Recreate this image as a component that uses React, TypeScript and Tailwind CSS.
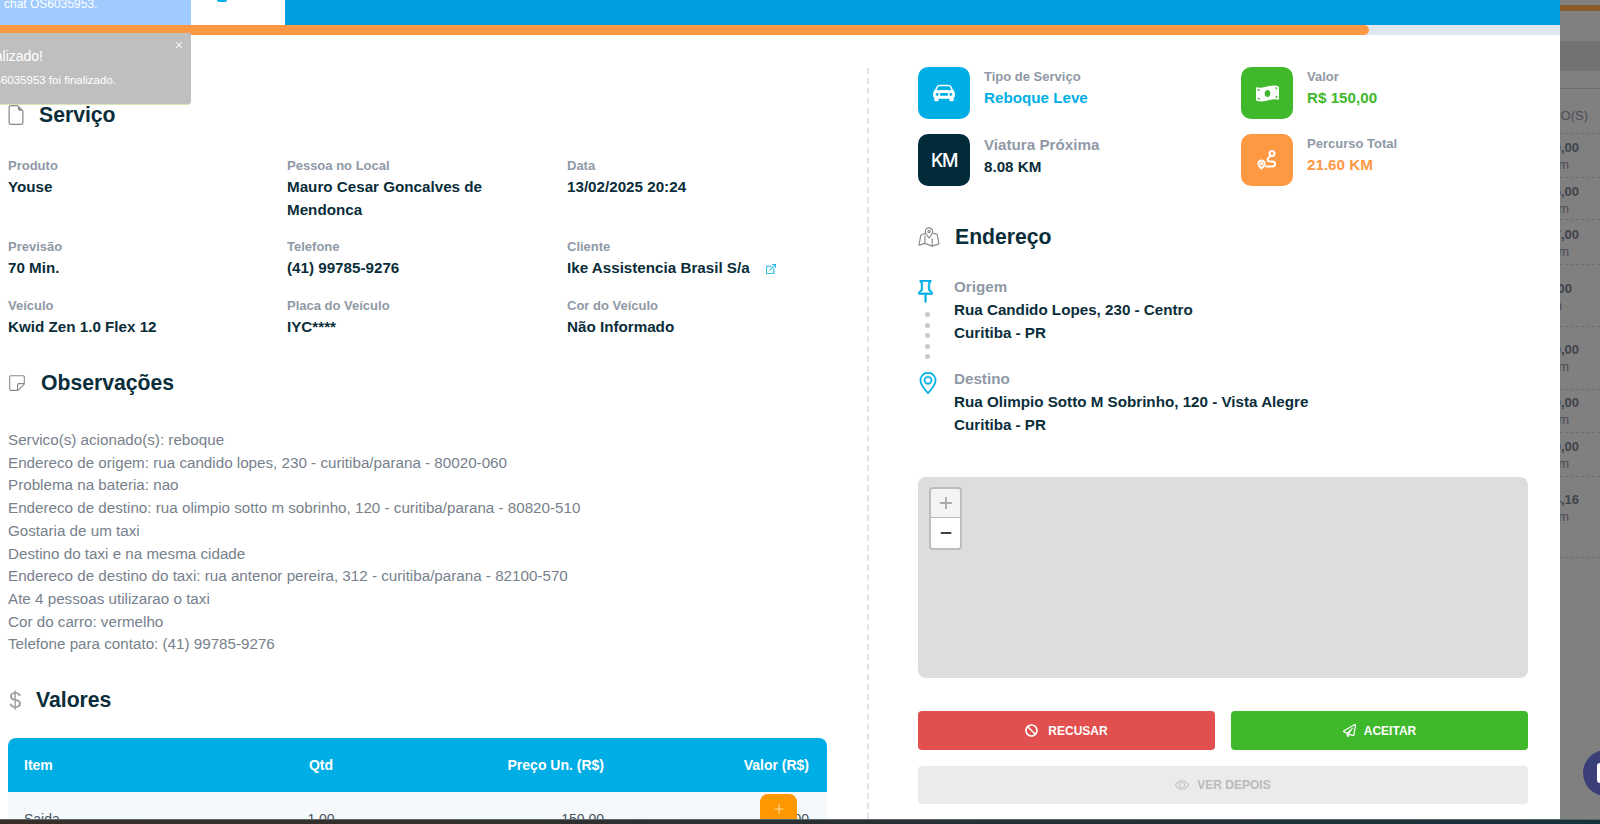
import React from "react";
import { Minus, Plus, X } from "lucide-react";
import { FaBan, FaMoneyBillWave, FaRegPaperPlane } from "react-icons/fa";
import {
  BsBoxArrowUpRight,
  BsCarFrontFill,
  BsCurrencyDollar,
  BsEye,
  BsFileEarmark,
  BsGeoAlt,
  BsPin,
  BsSticky,
} from "react-icons/bs";

const fields = [
  { label: "Produto", value: "Youse" },
  { label: "Pessoa no Local", value: "Mauro Cesar Goncalves de Mendonca" },
  { label: "Data", value: "13/02/2025 20:24" },
  { label: "Previsão", value: "70 Min." },
  { label: "Telefone", value: "(41) 99785-9276" },
  { label: "Cliente", value: "Ike Assistencia Brasil S/a", link: true },
  { label: "Veículo", value: "Kwid Zen 1.0 Flex 12" },
  { label: "Placa do Veículo", value: "IYC****" },
  { label: "Cor do Veículo", value: "Não Informado" },
];

const notes = [
  "Servico(s) acionado(s): reboque",
  "Endereco de origem: rua candido lopes, 230 - curitiba/parana - 80020-060",
  "Problema na bateria: nao",
  "Endereco de destino: rua olimpio sotto m sobrinho, 120 - curitiba/parana - 80820-510",
  "Gostaria de um taxi",
  "Destino do taxi e na mesma cidade",
  "Endereco de destino do taxi: rua antenor pereira, 312 - curitiba/parana - 82100-570",
  "Ate 4 pessoas utilizarao o taxi",
  "Cor do carro: vermelho",
  "Telefone para contato: (41) 99785-9276",
];

const backRows = [
  { cls: "h-[44px] pt-[5px] pr-[21px]", price: "10,00" },
  { cls: "h-[42px] pt-[5px] pr-[21px]", price: "15,00" },
  { cls: "h-[45px] pt-[6px] pr-[21px]", price: "17,00" },
  { cls: "h-[62px] pt-[15px] pr-[28px]", price: "200" },
  { cls: "h-[63px] pt-[14px] pr-[21px]", price: "20,00" },
  { cls: "h-[43px] pt-[4px] pr-[21px]", price: "30,00" },
  { cls: "h-[44px] pt-[5px] pr-[21px]", price: "40,00" },
  { cls: "h-[81px] pt-[14px] pr-[21px]", price: "64,16" },
];

const RouteIcon = () => (
  <svg width="24" height="24" viewBox="0 0 24 24" fill="none" stroke="currentColor" strokeWidth="2" strokeLinecap="round" strokeLinejoin="round">
    <circle cx="17" cy="5.5" r="2.5" />
    <path d="M6.5 12.5a3.2 3.2 0 0 0-3.2 3.2c0 1.8 1.7 3.2 3.2 4.8 1.5-1.6 3.2-3 3.2-4.8a3.2 3.2 0 0 0-3.2-3.2z" />
    <circle cx="6.5" cy="15.7" r="0.6" />
    <path d="M15 8.5c-1 1.2-2.5 1.3-2.5 3 0 1.5 1.2 2 3 2h2c1.5 0 2.5.7 2.5 2.2 0 1.6-1 2.8-2.5 2.8H11" />
  </svg>
);

const MapIcon = () => (
  <svg width="22" height="20" viewBox="0 0 24 22" fill="none" stroke="#8b8b8b" strokeWidth="1.3" strokeLinecap="round" strokeLinejoin="round">
    <path d="M12 1a4 4 0 0 0-4 4c0 2.6 4 7 4 7s4-4.4 4-7a4 4 0 0 0-4-4z" />
    <circle cx="12" cy="5" r="1.2" />
    <path d="M8 7 3 9 1 20l6.5-2 8 3L23 18.500 21 8l-4-1" />
    <path d="M7.500 10v8M15.500 13v8" />
  </svg>
);

const Heading = ({ icon, title, gap }: { icon: React.ReactNode; title: string; gap: string }) => (
  <div className={`flex items-center ${gap}`}>
    {icon}
    <h2 className="text-[21.2px] leading-[28px] font-bold text-[#0a2d3a]">{title}</h2>
  </div>
);

const Stat = ({ bg, icon, label, value, color, big }: { bg: string; icon: React.ReactNode; label: string; value: string; color: string; big?: boolean }) => (
  <div className="flex items-start gap-[14px]">
    <div className={`w-[52px] h-[52px] rounded-[10px] flex items-center justify-center text-white ${bg}`}>{icon}</div>
    <div className="flex flex-col">
      <span className={`font-bold text-[#8f99a6] ${big ? "text-[15.2px] leading-[22px]" : "text-[13px] leading-[20px]"}`}>{label}</span>
      <span className={`text-[15.2px] leading-[22px] font-bold ${color}`}>{value}</span>
    </div>
  </div>
);

const App = () => {
  return (
    <div className="h-screen w-full overflow-hidden flex flex-col relative font-['Liberation_Sans',sans-serif] bg-white">
      <div className="flex-1 min-h-0 flex">
        <div className="w-[1560px] shrink-0 flex flex-col min-h-0 bg-white">
          {/* topo do modal */}
          <div className="h-[25px] shrink-0 flex bg-[#009fe0]">
            <div className="w-[191px] bg-[#a0cbff] pl-1 text-[12px] leading-[8px] text-white overflow-hidden">chat OS6035953.</div>
            <div className="w-[94px] bg-white pl-[26px]">
              <div className="w-[10px] h-[2px] rounded-b-full bg-[#00aee6]" />
            </div>
          </div>
          <div className="h-[10px] shrink-0 bg-[#dfe8f0]">
            <div className="h-full w-[1369px] rounded-r-full bg-[#ff9843]" />
          </div>

          <div className="flex-1 min-h-0 flex pt-[33px] overflow-hidden">
            <div className="w-[869px] shrink-0 pl-2 pr-[40px] border-r-2 border-dashed border-[#e3e3e3]">
              <div className="pt-[33px]">
                <Heading icon={<BsFileEarmark size={20} className="text-[#8b8b8b] -ml-[2px]" />} title="Serviço" gap="gap-[13px]" />
              </div>

              <div className="grid grid-cols-[279px_280px_1fr] mt-[26px]">
                {fields.map((f, i) => (
                  <div key={f.label} className={i < 3 ? "h-[81px]" : i < 6 ? "h-[59px]" : "h-[46px]"}>
                    <div className="text-[13px] leading-[21px] font-bold text-[#8f99a6]">{f.label}</div>
                    <div className="text-[15.2px] leading-[22.5px] font-bold text-[#0a2d3a] pr-8 flex items-center">
                      <span>{f.value}</span>
                      {f.link && <BsBoxArrowUpRight size={10} className="text-[#00aee6] ml-4 mt-[2px] shrink-0 stroke-[0.6px]" />}
                    </div>
                  </div>
                ))}
              </div>

              <div className="mt-[28px]">
                <Heading icon={<BsSticky size={18} className="text-[#8b8b8b]" />} title="Observações" gap="gap-[15px]" />
              </div>

              <div className="mt-[32px] text-[15.2px] leading-[22.7px] text-[#77818c]">
                {notes.map((n) => (
                  <div key={n}>{n}</div>
                ))}
              </div>

              <div className="mt-[30px]">
                <Heading icon={<BsCurrencyDollar size={22} className="text-[#a0a0a0] -ml-[4px]" />} title="Valores" gap="gap-[10px]" />
              </div>

              <div className="mt-[24px] relative">
                <div className="h-[54px] rounded-t-[8px] bg-[#00aee6] grid grid-cols-[247px_100px_233px_1fr] items-center px-4 text-[14px] font-bold text-white">
                  <span>Item</span>
                  <span className="text-center">Qtd</span>
                  <span className="text-right">Preço Un. (R$)</span>
                  <span className="text-right pr-[2px]">Valor (R$)</span>
                </div>
                <div className="h-[54px] bg-[#f5f9fc] grid grid-cols-[247px_100px_233px_1fr] items-center px-4 text-[14px] text-[#4a5560]">
                  <span>Saida</span>
                  <span className="text-center">1,00</span>
                  <span className="text-right">150,00</span>
                  <span className="text-right pr-[2px]">150,00</span>
                </div>
                <div className="absolute left-[752px] top-[56px] w-[37px] h-[40px] rounded-[8px] bg-[#ff9800] flex justify-center pt-[8px] text-[#ffd79a]">
                  <Plus size={14} />
                </div>
              </div>
            </div>

            <div className="flex-1 pl-[49px] pr-[32px] -mt-[1px]">
              <div className="grid grid-cols-[323px_1fr] gap-y-[15px]">
                <Stat bg="bg-[#00aee6]" icon={<BsCarFrontFill size={22} />} label="Tipo de Serviço" value="Reboque Leve" color="text-[#00aee6]" />
                <Stat bg="bg-[#3fb82c]" icon={<FaMoneyBillWave size={23} />} label="Valor" value="R$ 150,00" color="text-[#3fb82c]" />
                <Stat bg="bg-[#022b3a]" icon={<span className="font-['Inter',sans-serif] text-[18px] font-medium tracking-[-1.5px]">KM</span>} label="Viatura Próxima" value="8.08 KM" color="text-[#0a2d3a]" big />
                <Stat bg="bg-[#ff9843]" icon={<RouteIcon />} label="Percurso Total" value="21.60 KM" color="text-[#ff9843]" />
              </div>

              <div className="mt-[37px]">
                <Heading icon={<MapIcon />} title="Endereço" gap="gap-[15px]" />
              </div>

              <div className="mt-[24px] flex">
                <div className="w-[36px] shrink-0 flex flex-col">
                  <BsPin size={23} className="text-[#00aee6] -ml-[4.5px] mt-[5px] stroke-[0.5px]" />
                  <div className="flex flex-col gap-[5.5px] mt-[9px] ml-[7px]">
                    {[0, 1, 2, 3, 4].map((d) => (
                      <div key={d} className="w-[5px] h-[5px] rounded-full bg-[#cacaca]" />
                    ))}
                  </div>
                  <BsGeoAlt size={22} className="text-[#00aee6] mt-[13px] -ml-[1px] stroke-[0.3px]" />
                </div>
                <div className="flex flex-col">
                  <div className="h-[92px]">
                    <div className="text-[15.2px] leading-[23px] font-bold text-[#8f99a6]">Origem</div>
                    <div className="text-[15.2px] leading-[23px] font-bold text-[#0a2d3a]">Rua Candido Lopes, 230 - Centro</div>
                    <div className="text-[15.2px] leading-[23px] font-bold text-[#0a2d3a]">Curitiba - PR</div>
                  </div>
                  <div>
                    <div className="text-[15.2px] leading-[23px] font-bold text-[#8f99a6]">Destino</div>
                    <div className="text-[15.2px] leading-[23px] font-bold text-[#0a2d3a]">Rua Olimpio Sotto M Sobrinho, 120 - Vista Alegre</div>
                    <div className="text-[15.2px] leading-[23px] font-bold text-[#0a2d3a]">Curitiba - PR</div>
                  </div>
                </div>
              </div>

              <div className="mt-[41px] h-[201px] rounded-[8px] bg-[#dddddd] relative">
                <div className="absolute left-[11px] top-[10px] w-[33px] rounded-[4px] border-2 border-[#bdbdbd] overflow-hidden">
                  <div className="h-[29px] bg-[#f4f4f4] border-b border-[#bbb] flex items-center justify-center text-[#aaa]">
                    <Plus size={18} strokeWidth={2.5} />
                  </div>
                  <div className="h-[30px] bg-white flex items-center justify-center text-black">
                    <Minus size={16} strokeWidth={2.5} />
                  </div>
                </div>
              </div>

              <div className="mt-[33px] grid grid-cols-2 gap-x-[16px]">
                <button className="h-[39px] rounded-[4px] bg-[#e24f4f] text-white text-[12px] font-bold flex items-center justify-center gap-[10px]">
                  <FaBan size={13} /> RECUSAR
                </button>
                <button className="h-[39px] rounded-[4px] bg-[#3fb82c] text-white text-[12px] font-bold flex items-center justify-center gap-[8px]">
                  <FaRegPaperPlane size={13} /> ACEITAR
                </button>
              </div>
              <button className="mt-[16px] w-full h-[38px] rounded-[4px] bg-[#ebebeb] text-[#bababa] text-[12px] font-bold flex items-center justify-center gap-[8px]">
                <BsEye size={14} /> VER DEPOIS
              </button>
            </div>
          </div>
        </div>

        {/* pagina atras do modal */}
        <div className="flex-1 bg-[#808080] overflow-hidden text-[#3f444b] relative">
          <div className="h-[5px]" />
          <div className="h-[6px] bg-[#8b5a2b]" />
          <div className="h-[30px]" />
          <div className="h-[30px] bg-[#737373]" />
          <div className="h-[18px] border-b border-[#6b6b6b]" />
          <div className="h-[45px] border-b border-dashed border-[#6e6e6e] flex items-end justify-end pr-[12px] pb-[8px] text-[13px] whitespace-nowrap text-[#4b4f55]">
            PREÇO(S)
          </div>
          {backRows.map((r) => (
            <div key={r.price} className={`${r.cls} border-b border-dashed border-[#6e6e6e] flex flex-col items-end whitespace-nowrap`}>
              <span className="text-[13px] leading-[17px] font-bold">{r.price}</span>
              <span className="text-[13px] leading-[17px] text-[#4b4f55] pr-[10px]">0 km</span>
            </div>
          ))}
        </div>
      </div>

      <div className="h-[5px] shrink-0 border-t border-[#5a6a6a] bg-gradient-to-r from-[#3a2e28] to-[#16303a]" />

      {/* toast por cima */}
      <div className="absolute left-0 top-[33px] w-[191px] h-[72px] rounded-br-[4px] bg-[#bfbfbf] border-b border-[#dbe6b4] overflow-hidden text-white">
        <X size={10} strokeWidth={2.5} className="absolute right-[7px] top-[7px]" />
        <div className="absolute right-[148px] top-[13px] text-[14px] leading-[20px] whitespace-nowrap">Chat finalizado!</div>
        <div className="absolute right-[75px] top-[39px] text-[11.5px] leading-[16px] whitespace-nowrap">O chat OS6035953 foi finalizado.</div>
      </div>

      {/* bolha de chat */}
      <div className="absolute left-[1583px] top-[750px] w-[46px] h-[46px] rounded-full bg-[#3b3f77] flex items-center pl-[14px]">
        <div className="w-[16px] h-[20px] rounded-[3px] bg-white" />
      </div>
    </div>
  );
};

export default App;
